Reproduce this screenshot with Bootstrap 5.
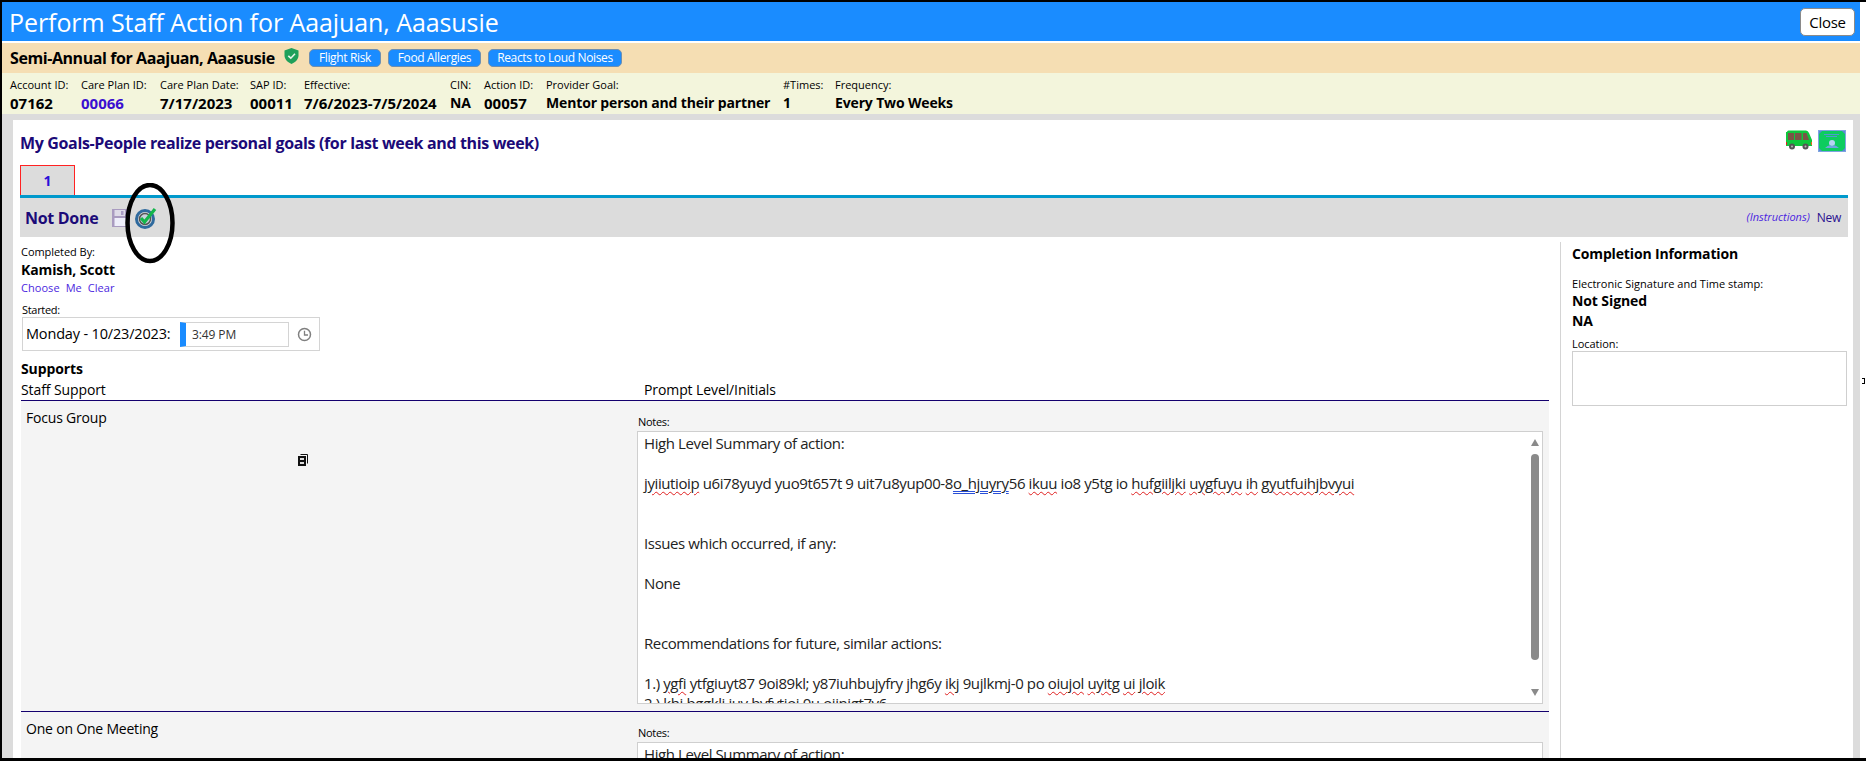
<!DOCTYPE html>
<html lang="en"><head><meta charset="utf-8"><title>Perform Staff Action</title>
<link href="https://cdn.jsdelivr.net/npm/bootstrap@5.3.0/dist/css/bootstrap.min.css" rel="stylesheet">
<style>
html,body{margin:0;height:761px;overflow:hidden;background:#fff}
body{font-family:"Open Sans","Noto Sans",sans-serif;color:#000;font-size:14px}
.frame{width:1866px;height:761px;border-top:2px solid #000;border-left:2px solid #000;border-bottom:3px solid #000;overflow:hidden;position:relative;box-sizing:border-box}
.shell{width:1858px}
.hdr{height:39px;background:#1a8cff;color:#fff;padding:0 5px 0 7px;margin-bottom:2px}
.hdr-title{font-size:25px;line-height:39px;letter-spacing:-.08px;padding-top:1px}
.close-btn{width:55px;height:28px;padding:0;font-size:15px;line-height:26px;background:#fff;border:1px solid #8a8a8a;border-radius:5px;color:#000;letter-spacing:-.3px}
.tanbar{height:30px;background:#f5deb3;padding-left:8px}
.tan-title{font-size:16px;font-weight:700;line-height:30px;letter-spacing:-.42px;width:274px;white-space:nowrap}
.shield{margin:-4px 10px 0 0}
.flag{height:18px;line-height:16px;padding:0;background:#1a8cff;color:#fff;font-size:12px;border:1px solid #6f8fb0;border-radius:5px;text-align:center;letter-spacing:-.35px}
.flag-a{width:72px}.flag-b{width:93px;margin:0 7px}.flag-c{width:134px}
.infobar{height:41px;background:#f3f5dc;padding:4px 0 0 8px;display:grid;grid-template-columns:71px 79px 90px 54px 146px 34px 62px 237px 52px 200px;white-space:nowrap}
.lbl{font-size:11px;line-height:16px;letter-spacing:0}
.val{font-size:14px;font-weight:700;line-height:20px;letter-spacing:-.15px}
.num{font-size:15px;letter-spacing:0}
.val-link{color:#3a0fd0}
.greyarea{background:#dcdcdc;padding:6px 7px 0 11px;height:700px}
.panel{background:#fff;padding:0 5px 0 7px;height:700px}
.titlerow{height:45px;padding-top:11px}
.goal{font-size:16px;font-weight:700;line-height:24px;color:#1b0a78;letter-spacing:-.35px}
.goal-icons{gap:6px;height:22px;margin:-1px 2px 0 0}
.tabbox{width:55px;height:30px;background:#dcdcdc;border:1px solid #f22;border-bottom:0;color:#2a10d8;font-weight:700;font-size:14px;line-height:30px;text-align:center}
.tabline{height:3px;background:#0099cc}
.statusbar{height:39px;background:#dcdcdc;padding:0 7px 0 5px}
.status{font-size:16px;font-weight:700;color:#1b0a78;letter-spacing:-.3px;margin-right:14px}
.status-icons{gap:5px}
.instr{font-size:11px;font-style:italic;color:#4b1fe0;margin-right:7px;letter-spacing:0}
.newlink{font-size:12px;color:#2a1090;letter-spacing:-.3px}
.leftcol{width:1541px;margin-top:5px;padding:2px 0 0 1px;border-right:1px solid #d4d4d4;height:600px}
.rightcol{padding:0 0 0 11px;margin-top:5px;width:287px}
.t11{font-size:11px;line-height:16px;letter-spacing:-.05px}
.t14b{font-size:14px;font-weight:700;line-height:20px;letter-spacing:-.1px}
.linkrow{font-size:11px;line-height:16px;letter-spacing:.05px;color:#4b1fe0;gap:6px}
.started{line-height:14px;margin:7px 0 0 1px;display:block;font-size:11px;letter-spacing:-.3px}
.timebox{width:298px;height:34px;margin-left:1px;border:1px solid #d4d4d4;padding-left:3px}
.datetxt{font-size:14.5px;letter-spacing:-.17px;width:154px;white-space:nowrap}
.timein{width:109px;height:25px;border:1px solid #d4d4d4;border-left:6px solid #1a8cff;font-size:12px;line-height:24px;padding-left:6px;color:#333;letter-spacing:-.1px}
.clock{margin-left:8px}
.supp{margin-top:8px;height:20px}
.heads{width:1528px;height:21px;margin-top:1px;border-bottom:1px solid #14006e;font-size:14px;line-height:20px;letter-spacing:-.1px}
.headl{width:623px}
.suprow{width:1528px;background:#f4f4f4;border-bottom:1px solid #14006e;height:311px;padding-top:14px}
.supl{width:616px;padding:0 0 0 5px;margin-top:-7px}
.supname{font-size:14px;line-height:20px;letter-spacing:-.2px;height:20px}
.copyic{display:block;margin:26px 0 0 272px}
.noteslbl{font-size:11px;line-height:14px;padding-left:1px;letter-spacing:-.3px;margin-bottom:2px}
.notesbox{width:906px;height:273px;background:#fff;border:1px solid #cfcfcf;position:relative;overflow:hidden;padding:1px 0 0 6px;font-size:15px;line-height:20px;letter-spacing:-.4px;color:#222;white-space:nowrap}
.bad{text-decoration:underline wavy #e02020 1px;text-underline-offset:2px}
.gram{text-decoration:underline double #2a50d8 1px;text-underline-offset:2px}
.sb-thumb{position:absolute;left:893px;top:22px;width:8px;height:206px;background:#8a8a8a;border-radius:4px}
.sb-up,.sb-down{position:absolute;left:893px;width:0;height:0;border-left:4px solid transparent;border-right:4px solid transparent}
.sb-up{top:7px;border-bottom:7px solid #8a8a8a}
.sb-down{top:257px;border-top:7px solid #8a8a8a}
.ci-title{font-size:14px;font-weight:700;line-height:20px;padding-top:2px;height:34px;letter-spacing:-.15px}
.locbox{width:275px;height:55px;border:1px solid #cfcfcf;background:#fff}
.loclbl{margin-top:6px;line-height:14px;font-size:11px;letter-spacing:-.05px}
.sigmt{line-height:15px;letter-spacing:.02px}
.annot{position:absolute;left:120px;top:181px;pointer-events:none}
.edge-mark{position:absolute;left:1860px;top:376px;width:3px;height:6px;border:1px solid #000;border-left:0}
</style></head>
<body>
<div class="frame">
 <div class="shell">
  <div class="hdr d-flex justify-content-between align-items-center">
    <div class="hdr-title">Perform Staff Action for Aaajuan, Aaasusie</div>
    <button class="close-btn">Close</button>
  </div>
  <div class="tanbar d-flex align-items-center">
    <div class="tan-title">Semi-Annual for Aaajuan, Aaasusie</div>
    <svg class="shield" width="15" height="16" viewBox="0 0 15 16"><path d="M7.500 0 L14.500 2.500 V7.500 C14.500 11.500 11 14.500 7.500 16 C4 14.500 .5 11.500 .5 7.500 V2.500Z" fill="#1fa05a"/><path d="M4.300 7.800 L6.800 10.200 L11 5.800" fill="none" stroke="#e8f5e8" stroke-width="1.600"/></svg>
    <div class="flag flag-a">Flight Risk</div><div class="flag flag-b">Food Allergies</div><div class="flag flag-c">Reacts to Loud Noises</div>
  </div>
  <div class="infobar">
    <div><div class="lbl">Account ID:</div><div class="val num">07162</div></div>
    <div><div class="lbl">Care Plan ID:</div><div class="val num val-link">00066</div></div>
    <div><div class="lbl">Care Plan Date:</div><div class="val num">7/17/2023</div></div>
    <div><div class="lbl">SAP ID:</div><div class="val num">00011</div></div>
    <div><div class="lbl">Effective:</div><div class="val num">7/6/2023-7/5/2024</div></div>
    <div><div class="lbl">CIN:</div><div class="val">NA</div></div>
    <div><div class="lbl">Action ID:</div><div class="val num">00057</div></div>
    <div><div class="lbl">Provider Goal:</div><div class="val">Mentor person and their partner</div></div>
    <div><div class="lbl">#Times:</div><div class="val">1</div></div>
    <div><div class="lbl">Frequency:</div><div class="val">Every Two Weeks</div></div>
  </div>
  <div class="greyarea">
   <div class="panel">
    <div class="titlerow d-flex justify-content-between">
      <div class="goal">My Goals-People realize personal goals (for last week and this week)</div>
      <div class="goal-icons d-flex">
        <svg width="26" height="20" viewBox="0 0 26 20"><path d="M1 2 Q1 0.5 2.500 0.5 H20 Q22 .5 23 3 L26 10 V16 H0 V2Z" fill="#0fc73c"/><rect x="2" y="3" width="6" height="7" fill="#7a5546"/><rect x="9" y="3" width="6.500" height="7" fill="#7a5546"/><path d="M17 3 H20.500 L23 10 H17Z" fill="#7a5546"/><rect x="25" y="12" width="1" height="3" fill="#e8641e"/><rect x="0" y="12" width="1" height="3" fill="#e02020"/><circle cx="6" cy="16.500" r="3" fill="#555"/><circle cx="6" cy="16.500" r="1" fill="#bbb"/><circle cx="19.500" cy="16.500" r="3" fill="#555"/><circle cx="19.500" cy="16.500" r="1" fill="#bbb"/></svg>
        <svg width="28" height="22" viewBox="0 0 28 22"><rect width="28" height="22" fill="#0dcc5f"/><path d="M0 0H5L0 5ZM28 0H23L28 5ZM0 22H5L0 17ZM28 22H23L28 17Z" fill="#5b86d8"/><rect x=".5" y=".5" width="27" height="21" fill="none" stroke="#7ea4e0"/><path d="M6 4.500H21M8 6.500H19" stroke="#4f9ad0"/><circle cx="14" cy="13" r="3" fill="#b7d3f2"/><path d="M7 18 Q11 14 14 16 Q17 14 21 18Z" fill="#6fa5e0"/></svg>
      </div>
    </div>
    <div class="tabbox">1</div>
    <div class="tabline"></div>
    <div class="statusbar d-flex align-items-center">
      <div class="status">Not Done</div>
      <div class="status-icons d-flex align-items-center">
        <svg width="18" height="18" viewBox="0 0 18 18"><path d="M0 0H15L18 3V18H0Z" fill="#a99bc0"/><rect x="2.500" y="1" width="10.500" height="6" fill="#dedbe8"/><rect x="9" y="2" width="2.500" height="4" fill="#a99cc4"/><rect x="2.500" y="9" width="13" height="8" fill="#eeeefa"/></svg>
        <svg width="22" height="22" viewBox="0 0 22 22"><circle cx="10" cy="12" r="8.500" fill="none" stroke="#2f6a9e" stroke-width="3"/><circle cx="10" cy="12" r="5.500" fill="#c8d2dc" stroke="#555" stroke-width="1.500"/><path d="M6 11 L9.500 15 L20 2" fill="none" stroke="#14b54a" stroke-width="3.200"/></svg>
      </div>
      <div class="ms-auto instr">(Instructions)</div><div class="newlink">New</div>
    </div>
    <div class="d-flex">
     <div class="leftcol">
       <div class="t11">Completed By:</div>
       <div class="t14b">Kamish, Scott</div>
       <div class="linkrow d-flex"><span>Choose</span><span>Me</span><span>Clear</span></div>
       <span class="started">Started:</span>
       <div class="timebox d-flex align-items-center">
         <div class="datetxt">Monday - 10/23/2023:</div>
         <div class="timein">3:49 PM</div>
         <svg class="clock" width="15" height="15" viewBox="0 0 15 15"><circle cx="7.500" cy="7.500" r="6" fill="none" stroke="#808080" stroke-width="1.500"/><path d="M7.500 3.800V8H11" fill="none" stroke="#808080" stroke-width="1.300"/></svg>
       </div>
       <div class="t14b supp">Supports</div>
       <div class="heads d-flex"><div class="headl">Staff Support</div><div>Prompt Level/Initials</div></div>
       <div class="suprow d-flex">
         <div class="supl">
           <div class="supname">Focus Group</div>
           <svg class="copyic" width="10" height="12" viewBox="0 0 10 12"><path d="M2.500 .5H9.500V9.500" fill="none" stroke="#111"/><rect x="0" y="2" width="8" height="10" fill="#111"/><rect x="2" y="4" width="4" height="2" fill="#ddd"/><rect x="2" y="8" width="4" height="2" fill="#ddd"/></svg>
         </div>
         <div>
           <div class="noteslbl">Notes:</div>
           <div class="notesbox">
             <div>High Level Summary of action:</div><br>
             <div><span class="bad">jyiiutioip</span> u6i78yuyd yuo9t657t 9 uit7u8yup00-8<span class="gram">o_hjuyry</span>56 <span class="bad">ikuu</span> io8 y5tg io <span class="bad">hufgiiljki</span> <span class="bad">uygfuyu</span> <span class="bad">ih</span> <span class="bad">gyutfuihjbvyui</span></div>
             <br><br>
             <div>Issues which occurred, if any:</div><br>
             <div>None</div><br><br>
             <div>Recommendations for future, similar actions:</div><br>
             <div>1.) <span class="bad">ygfi</span> ytfgiuyt87 9oi89kl; y87iuhbujyfry jhg6y <span class="bad">ikj</span> 9ujlkmj-0 po <span class="bad">oiujol</span> <span class="bad">uyitg</span> <span class="bad">ui</span> <span class="bad">jloik</span></div>
             <div>2.) khi bggkli juy bvfvtioj 0u ojjnjgt7y6</div>
             <div class="sb-up"></div><div class="sb-thumb"></div><div class="sb-down"></div>
           </div>
         </div>
       </div>
       <div class="suprow d-flex">
         <div class="supl"><div class="supname">One on One Meeting</div></div>
         <div>
           <div class="noteslbl">Notes:</div>
           <div class="notesbox"><div>High Level Summary of action:</div></div>
         </div>
       </div>
     </div>
     <div class="rightcol">
       <div class="ci-title">Completion Information</div>
       <div class="t11 sigmt">Electronic Signature and Time stamp:</div>
       <div class="t14b">Not Signed</div>
       <div class="t14b">NA</div>
       <div class="loclbl">Location:</div>
       <div class="locbox"></div>
     </div>
    </div>
   </div>
  </div>
 </div>
 <svg class="annot" width="60" height="84" viewBox="0 0 60 84"><ellipse cx="28" cy="40" rx="22.500" ry="38" fill="none" stroke="#000" stroke-width="4.500"/></svg>
 <div class="edge-mark"></div>
</div>
</body></html>
